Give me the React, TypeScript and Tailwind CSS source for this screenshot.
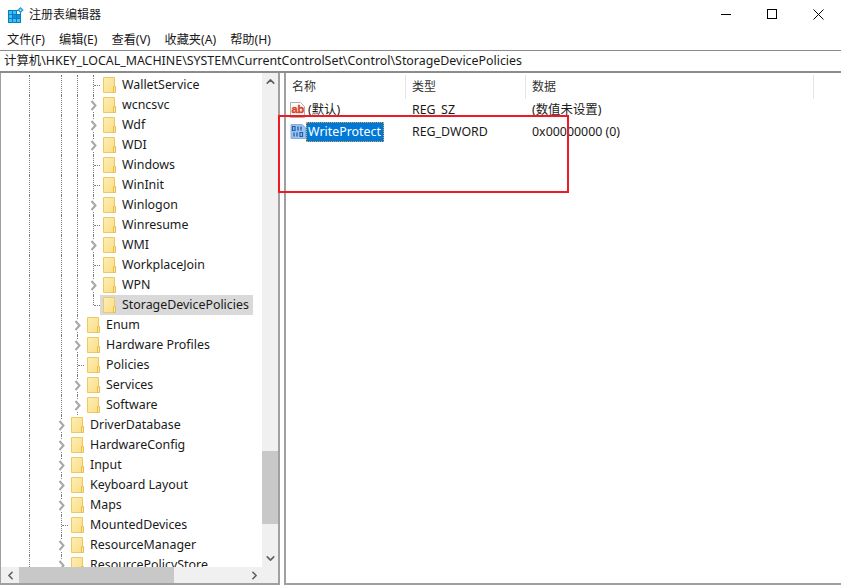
import type { ReactNode } from "react";
import { ChevronDown, ChevronLeft, ChevronRight, ChevronUp } from "lucide-react";

const font = "font-['Noto_Sans','Noto_Sans_CJK_SC',sans-serif]";

type Node = { name: string; level: 2 | 3 | 4; kids?: boolean; selected?: boolean };

const nodes: Node[] = [
  { name: "WalletService", level: 4 },
  { name: "wcncsvc", level: 4, kids: true },
  { name: "Wdf", level: 4, kids: true },
  { name: "WDI", level: 4, kids: true },
  { name: "Windows", level: 4 },
  { name: "WinInit", level: 4 },
  { name: "Winlogon", level: 4, kids: true },
  { name: "Winresume", level: 4 },
  { name: "WMI", level: 4, kids: true },
  { name: "WorkplaceJoin", level: 4 },
  { name: "WPN", level: 4, kids: true },
  { name: "StorageDevicePolicies", level: 4, selected: true },
  { name: "Enum", level: 3, kids: true },
  { name: "Hardware Profiles", level: 3, kids: true },
  { name: "Policies", level: 3 },
  { name: "Services", level: 3, kids: true },
  { name: "Software", level: 3, kids: true },
  { name: "DriverDatabase", level: 2, kids: true },
  { name: "HardwareConfig", level: 2, kids: true },
  { name: "Input", level: 2, kids: true },
  { name: "Keyboard Layout", level: 2, kids: true },
  { name: "Maps", level: 2, kids: true },
  { name: "MountedDevices", level: 2 },
  { name: "ResourceManager", level: 2, kids: true },
  { name: "ResourcePolicyStore", level: 2, kids: true },
];

function Folder() {
  return (
    <svg width="13" height="16" viewBox="0 0 13 16" className="shrink-0">
      <defs>
        <linearGradient id="folderFill" x1="0" y1="0" x2="1" y2="1">
          <stop offset="0" stopColor="#fdeeb4" />
          <stop offset="1" stopColor="#fbdc84" />
        </linearGradient>
      </defs>
      <path d="M0.5 0.5h11v15h-11z" fill="url(#folderFill)" stroke="#efc95e" />
      <path d="M10.5 9.5h2v6h-2z" fill="#fde9a5" stroke="#e6bd50" />
    </svg>
  );
}

function Guide({ on }: { on: boolean }) {
  return <div className={`h-full w-4 shrink-0 ${on ? "border-l border-dotted border-[#7d7d7d]" : ""}`} />;
}

function TreeRow({ node, last }: { node: Node; last: boolean }) {
  const endsHere = last || node.selected;
  return (
    <div className="flex h-5 shrink-0 items-center pl-[29px]">
      <Guide on />
      <Guide on={false} />
      {node.level >= 3 ? <Guide on /> : null}
      {node.level >= 4 ? <Guide on /> : null}
      <div className="relative flex h-full items-center">
        <div
          className={`w-px border-l border-dotted border-[#7d7d7d] ${
            endsHere ? "h-1/2 self-start" : "h-full"
          } ${node.name === "Software" ? "h-1/2 self-start" : ""}`}
        />
        {node.kids ? (
          <svg width="8" height="11" viewBox="0 0 8 11" className="absolute left-[-3px] bg-white">
            <path d="M1.5 1l4 4.5-4 4.5" fill="none" stroke="#a6a6a6" strokeWidth="2" />
          </svg>
        ) : (
          <div className="w-[6px] border-t border-dotted border-[#7d7d7d]" />
        )}
      </div>
      <div
        className={`flex h-full items-center ${node.kids ? "ml-[9px]" : node.selected ? "" : "ml-[3px]"} ${
          node.selected ? "bg-[#d9d9d9] pr-[4px] pl-[3px]" : ""
        }`}
      >
        <Folder />
        <span className="ml-[6px] text-[12.4px] whitespace-nowrap text-[#1a1a1a]">{node.name}</span>
      </div>
    </div>
  );
}

function AppIcon() {
  return (
    <svg width="16" height="17" viewBox="0 0 16 17" className="shrink-0">
      <rect x="0" y="3" width="13" height="13" fill="#0a7cc4" />
      <path d="M1 4h3v3H1zM5 4h3v3H5zM1 8h3v3H1zM1 12h3v3H1zM5 12h3v3H5zM9 12h3v3H9z" fill="#3cc0f8" />
      <path d="M5 8h3v3H5zM9 8h3v3H9z" fill="#0f8fd8" />
      <path d="M9 4h3v3H9z" fill="#ffffff" />
      <path d="M12.5 0l3.2 3-3.2 3.2L9.3 3z" fill="#2a9bd8" />
      <path d="M12.5 1.8l1.2 1.2-1.2 1.2-1.2-1.2z" fill="#bfe6fa" />
    </svg>
  );
}

function AbIcon() {
  return (
    <svg width="16" height="16" viewBox="0 0 16 16" className="shrink-0">
      <path d="M0.5 0.5h10l4 4v11h-14z" fill="#fbfbfb" stroke="#b0b0b0" />
      <text
        x="1.5"
        y="11"
        fontSize="11"
        fontWeight="700"
        fill="#d8432a"
        stroke="#d8432a"
        strokeWidth="0.4"
        fontFamily="Liberation Sans, sans-serif"
      >
        ab
      </text>
    </svg>
  );
}

function DwordIcon() {
  return (
    <svg width="16" height="16" viewBox="0 0 16 16" className="shrink-0">
      <path d="M1 0.5h11l3.5 3v11h-14.500z" fill="#9cc1ea" stroke="#86aede" />
      <path d="M2.500 2.500h2.500v4h-2.500zM10 8.500h2.500v4h-2.500z" fill="none" stroke="#1b5fb0" strokeWidth="1.200" />
      <path d="M8 2.500v4M11 2.500v4M4 8.500v4M7 8.500v4" stroke="#1b5fb0" strokeWidth="1.300" />
    </svg>
  );
}

function ValueRow({
  icon,
  name,
  type,
  data,
  selected,
}: {
  icon: ReactNode;
  name: string;
  type: string;
  data: string;
  selected?: boolean;
}) {
  return (
    <div className="flex h-[22px] items-center text-[12.4px] text-[#1a1a1a]">
      <div className="flex w-[126px] items-center pl-[4px]">
        {icon}
        {selected ? (
          <span className="border border-dotted border-[#e8a33d] bg-[#0078d7] pr-[2px] pl-[1px] leading-[18px] text-white">
            {name}
          </span>
        ) : (
          <span className="ml-[2px]">{name}</span>
        )}
      </div>
      <div className="w-[120px] whitespace-nowrap">{type}</div>
      <div className="whitespace-nowrap">{data}</div>
    </div>
  );
}

export default function App() {
  return (
    <div className={`flex h-[585px] w-[841px] flex-col overflow-hidden bg-white ${font}`}>
      {/* title bar */}
      <div className="flex h-[30px] shrink-0 items-center pl-[8px]">
        <AppIcon />
        <span className="ml-[5px] text-[12px] text-[#1a1a1a]">注册表编辑器</span>
        <div className="ml-auto flex items-center pb-[2px]">
          <div className="flex w-[46px] justify-center">
            <div className="h-px w-[10px] bg-black" />
          </div>
          <div className="flex w-[46px] justify-center">
            <div className="h-[10px] w-[10px] border border-black" />
          </div>
          <div className="flex w-[46px] justify-center">
            <svg width="11" height="11" viewBox="0 0 11 11">
              <path d="M0.500 0.500l10 10M10.500 0.500l-10 10" stroke="#000" />
            </svg>
          </div>
        </div>
      </div>

      {/* menu */}
      <div className="flex h-[20px] shrink-0 items-center gap-[14px] pl-[7px] text-[12.2px] text-[#1a1a1a]">
        <span>文件(F)</span>
        <span>编辑(E)</span>
        <span>查看(V)</span>
        <span>收藏夹(A)</span>
        <span>帮助(H)</span>
      </div>

      {/* address bar */}
      <div className="flex h-[23px] shrink-0 items-center border-t border-b-2 border-t-[#8c8c8c] border-b-[#8c8c8c] pl-[4px] text-[12.400px] text-[#1a1a1a]">
        计算机\HKEY_LOCAL_MACHINE\SYSTEM\CurrentControlSet\Control\StorageDevicePolicies
      </div>

      <div className="flex min-h-0 flex-1">
        {/* tree pane */}
        <div className="flex w-[280px] shrink-0 flex-col border-r-2 border-b-2 border-l border-[#a0a0a0]">
          <div className="flex min-h-0 flex-1">
            <div className="-ml-px flex min-w-0 flex-1 flex-col overflow-hidden pt-[2px]">
              {nodes.map((node, i) => (
                <TreeRow key={node.name} node={node} last={i === nodes.length - 1} />
              ))}
            </div>
            {/* vertical scrollbar */}
            <div className="flex w-[16px] shrink-0 flex-col bg-[#f0f0f0]">
              <div className="flex h-[17px] items-center justify-center">
                <ChevronUp size={13} strokeWidth={3} className="text-[#606060]" />
              </div>
              <div className="mt-[361px] h-[73px] bg-[#c8c8c8]" />
              <div className="mt-auto flex h-[17px] items-center justify-center">
                <ChevronDown size={13} strokeWidth={3} className="text-[#606060]" />
              </div>
            </div>
          </div>
          {/* horizontal scrollbar */}
          <div className="flex h-[16px] shrink-0 items-center bg-[#f0f0f0] pr-[16px] pl-[2px]">
            <ChevronLeft size={13} strokeWidth={3} className="ml-px text-[#606060]" />
            <div className="ml-[2px] h-full w-[155px] bg-[#c8c8c8]" />
            <ChevronRight size={13} strokeWidth={3} className="mr-px ml-auto text-[#606060]" />
          </div>
        </div>

        {/* values pane */}
        <div className="relative ml-[4px] flex min-w-0 flex-1 flex-col border-b-2 border-l-2 border-[#a0a0a0]">
          <div className="mt-[2px] flex h-[24px] shrink-0 items-center text-[12px] text-[#333]">
            <div className="h-full w-[120px] border-r border-[#e5e5e5] pl-[6px] leading-[24px]">名称</div>
            <div className="h-full w-[120px] border-r border-[#e5e5e5] pl-[6px] leading-[24px]">类型</div>
            <div className="h-full w-[288px] border-r border-[#e5e5e5] pl-[6px] leading-[24px]">数据</div>
          </div>
          <ValueRow icon={<AbIcon />} name="(默认)" type="REG_SZ" data="(数值未设置)" />
          <ValueRow
            icon={<DwordIcon />}
            name="WriteProtect"
            type="REG_DWORD"
            data="0x00000000 (0)"
            selected
          />
          {/* annotation box */}
          <div className="absolute top-[42px] left-[-8px] h-[78px] w-[291px] border-2 border-[#ed1c24]" />
        </div>
      </div>
    </div>
  );
}
